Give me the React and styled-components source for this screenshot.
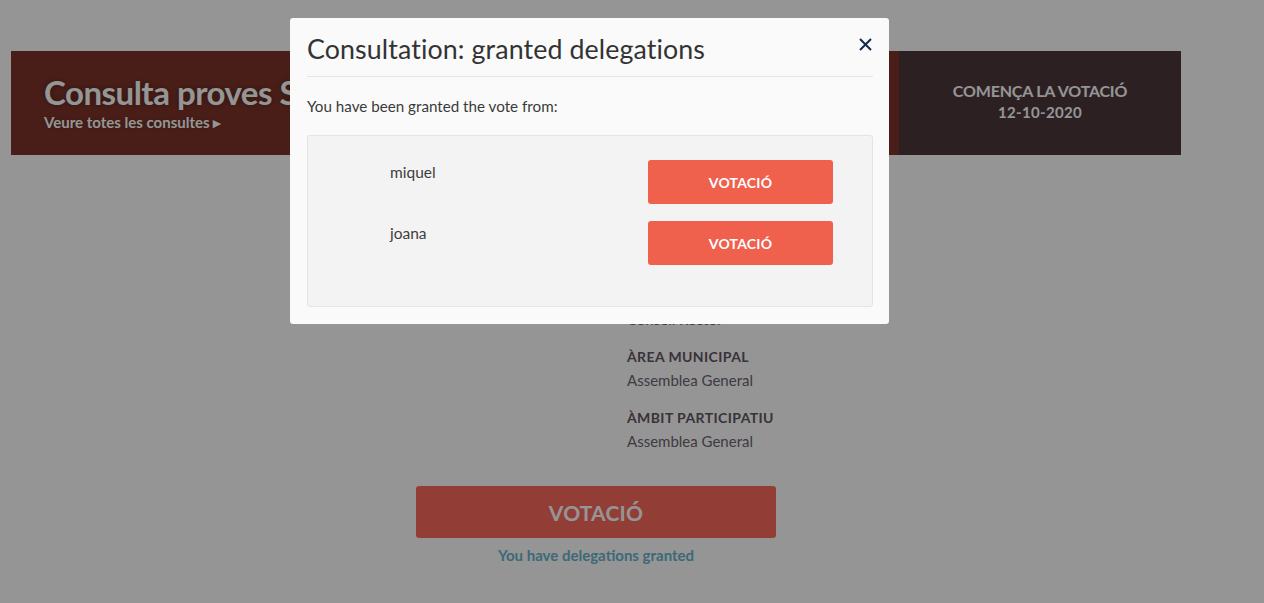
import React from "react";
import styled, { createGlobalStyle } from "styled-components";

const GlobalStyle = createGlobalStyle`
  html, body { margin: 0; padding: 0; background: #ffffff; }
  body { font-family: Lato, "Open Sans", "Noto Sans", sans-serif; color: #3d3d3d; }
  * { box-sizing: border-box; }
`;

const Page = styled.div`
  position: relative;
  min-height: 603px;
  padding: 51px 0 0 11px;
`;

const Container = styled.div`
  width: 1170px;
`;

const Hero = styled.section`
  display: flex;
  height: 104px;
`;

const HeroMain = styled.div`
  flex: 1;
  background: #7c2f24;
  padding: 21px 33px 0;
  overflow: hidden;
`;

const HeroTitle = styled.h1`
  margin: 0;
  font-size: 33px;
  line-height: 40px;
  font-weight: 700;
  letter-spacing: -0.5px;
  color: #ffffff;
  white-space: nowrap;
  text-shadow: 0 0 6px rgba(0, 0, 0, 0.45);
`;

const HeroLink = styled.a`
  display: block;
  font-size: 15px;
  line-height: 20px;
  font-weight: 700;
  color: #ffffff;
  text-decoration: none;
  text-shadow: 0 0 4px rgba(0, 0, 0, 0.35);
`;

const HeroAside = styled.div`
  width: 282px;
  background: #473238;
  display: flex;
  flex-direction: column;
  align-items: center;
  justify-content: center;
  padding-bottom: 4px;
  color: #ffffff;
`;

const AsideLabel = styled.div`
  font-size: 16px;
  line-height: 22px;
  font-weight: 700;
  letter-spacing: -0.2px;
`;

const AsideDate = styled.div`
  font-size: 15px;
  line-height: 20px;
  font-weight: 700;
  letter-spacing: 0.3px;
`;

const Content = styled.section`
  padding-top: 130px;
  display: grid;
  grid-template-columns: 616px 1fr;
`;

const MetaList = styled.dl`
  grid-column: 2;
  margin: 0;
`;

const MetaLabel = styled.dt`
  font-size: 14px;
  line-height: 22px;
  font-weight: 700;
  letter-spacing: 0.4px;
  text-transform: uppercase;
  color: #5f515d;
`;

const MetaValue = styled.dd`
  margin: 0 0 15px;
  font-size: 15px;
  line-height: 24px;
  color: #6a6070;
`;

const VoteArea = styled.div`
  display: flex;
  flex-direction: column;
  align-items: center;
  padding-top: 18px;
`;

const BigButton = styled.button`
  width: 360px;
  height: 52px;
  border: none;
  border-radius: 3px;
  background: #f9675b;
  color: #ffffff;
  font-family: inherit;
  font-size: 21px;
  font-weight: 700;
  letter-spacing: 0.2px;
`;

const DelegationNote = styled.div`
  margin-top: 7px;
  font-size: 15px;
  line-height: 20px;
  font-weight: 700;
  color: #65b2cb;
`;

const Overlay = styled.div`
  position: fixed;
  inset: 0;
  background: rgba(10, 10, 10, 0.43);
`;

const Modal = styled.div`
  position: absolute;
  top: 18px;
  left: 290px;
  width: 599px;
  background: #fafafa;
  border-radius: 3px;
  padding: 16px 16px 17px 17px;
`;

const ModalTitle = styled.h3`
  margin: 0;
  padding-bottom: 11px;
  border-bottom: 1px solid #e5e5e5;
  font-size: 26.8px;
  line-height: 31px;
  font-weight: 400;
  letter-spacing: 0.1px;
  color: #333333;
`;

const CloseButton = styled.button`
  position: absolute;
  top: 18px;
  right: 16px;
  width: 16px;
  height: 16px;
  padding: 0;
  border: none;
  background: none;
  display: flex;
  align-items: center;
  justify-content: center;
  color: #13294b;
`;

const ModalText = styled.p`
  margin: 17px 0 17px;
  font-size: 15.2px;
  line-height: 24px;
  color: #3a3a3a;
`;

const DelegationBox = styled.div`
  background: #f3f3f3;
  border: 1px solid #e4e4e4;
  border-radius: 3px;
  padding: 24px 0 24px 82px;
`;

const DelegationRow = styled.div`
  display: grid;
  grid-template-columns: 258px 185px;
  align-items: start;
  margin-bottom: 17px;
`;

const Name = styled.span`
  font-size: 15.5px;
  line-height: 24px;
  color: #3d3d3d;
`;

const SmallButton = styled.button`
  height: 44px;
  border: none;
  border-radius: 3px;
  background: #ef604d;
  color: #ffffff;
  font-family: inherit;
  font-size: 14px;
  font-weight: 700;
  letter-spacing: 0.2px;
`;

const delegations = ["miquel", "joana"];

export default function App() {
  return (
    <>
      <GlobalStyle />
      <Page>
        <Container>
          <Hero>
            <HeroMain>
              <HeroTitle>Consulta proves Sabadell</HeroTitle>
              <HeroLink href="#">Veure totes les consultes ▸</HeroLink>
            </HeroMain>
            <HeroAside>
              <AsideLabel>COMENÇA LA VOTACIÓ</AsideLabel>
              <AsideDate>12-10-2020</AsideDate>
            </HeroAside>
          </Hero>
          <Content>
            <MetaList>
              <MetaLabel>Òrgan promotor</MetaLabel>
              <MetaValue>Consell Rector</MetaValue>
              <MetaLabel>Àrea municipal</MetaLabel>
              <MetaValue>Assemblea General</MetaValue>
              <MetaLabel>Àmbit participatiu</MetaLabel>
              <MetaValue>Assemblea General</MetaValue>
            </MetaList>
          </Content>
          <VoteArea>
            <BigButton>VOTACIÓ</BigButton>
            <DelegationNote>You have delegations granted</DelegationNote>
          </VoteArea>
        </Container>
        <Overlay>
          <Modal>
            <ModalTitle>Consultation: granted delegations</ModalTitle>
            <CloseButton aria-label="Close">
              <svg width="13" height="13" viewBox="0 0 13 13">
                <path d="M1 1 L12 12 M12 1 L1 12" stroke="currentColor" strokeWidth="2" />
              </svg>
            </CloseButton>
            <ModalText>You have been granted the vote from:</ModalText>
            <DelegationBox>
              {delegations.map((n) => (
                <DelegationRow key={n}>
                  <Name>{n}</Name>
                  <SmallButton>VOTACIÓ</SmallButton>
                </DelegationRow>
              ))}
            </DelegationBox>
          </Modal>
        </Overlay>
      </Page>
    </>
  );
}
